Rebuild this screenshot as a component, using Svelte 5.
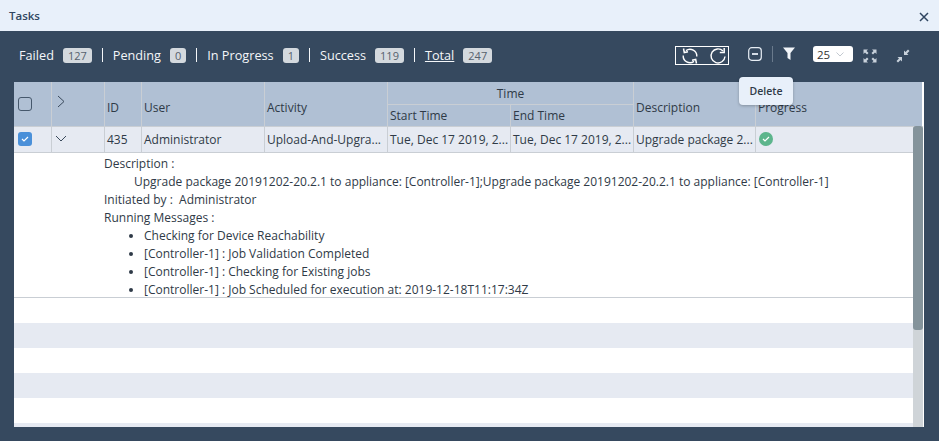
<script>
  const stats = [
    { label: 'Failed', n: 127 },
    { label: 'Pending', n: 0 },
    { label: 'In Progress', n: 1 },
    { label: 'Success', n: 119 },
    { label: 'Total', n: 247, link: true }
  ];
  const messages = [
    'Checking for Device Reachability',
    '[Controller-1] : Job Validation Completed',
    '[Controller-1] : Checking for Existing jobs',
    '[Controller-1] : Job Scheduled for execution at: 2019-12-18T11:17:34Z'
  ];
</script>

<div class="page">
  <header class="title">
    <span>Tasks</span>
    <svg class="close" width="10" height="10" viewBox="0 0 10 10"><path d="M1 1l8 8M9 1l-8 8" stroke="#2f4560" stroke-width="1.5" fill="none"/></svg>
  </header>

  <div class="toolbar">
    <div class="stats">
      {#each stats as s, i}
        {#if i > 0}<i class="sep"></i>{/if}
        <span class="stat" class:link={s.link}>{s.label}</span>
        <span class="badge">{s.n}</span>
      {/each}
    </div>
    <div class="tools">
      <div class="refresh">
        <svg width="18" height="18" viewBox="0 0 18 18" fill="none" stroke="#fff" stroke-width="1.4">
          <path d="M5 3.600A6.800 6.800 0 0 1 15.800 9.500M13 14.400A6.800 6.800 0 0 1 2.200 8.500"/>
          <path d="M2.500 1.500l.8 4 3.700-.8M15.500 16.500l-.8-4-3.700.8" stroke-width="1.500"/>
        </svg>
        <svg width="18" height="18" viewBox="0 0 18 18" fill="none" stroke="#fff" stroke-width="1.4">
          <path d="M14 4A7 7 0 1 0 16 9.500"/>
          <path d="M15.200 1v4.400h-4.400" stroke-width="1.500"/>
        </svg>
      </div>
      <svg class="minus" width="14" height="14" viewBox="0 0 14 14" fill="none" stroke="#e8eef5"><rect x="0.700" y="0.700" width="12.600" height="12.600" rx="3" stroke-width="1.200"/><path d="M4 7h6" stroke-width="1.800"/></svg>
      <i class="vsep"></i>
      <svg class="funnel" width="12" height="13" viewBox="0 0 12 13"><path d="M0 0.500h12L7.500 6v7l-3-2V6z" fill="#f2f5f9"/></svg>
      <div class="select"><span>25</span><svg width="8" height="5" viewBox="0 0 8 5" fill="none" stroke="#c3c9d0"><path d="M.5.5L4 4 7.500 .5"/></svg></div>
      <svg class="expand" width="14" height="14" viewBox="0 0 14 14" fill="#c9d2dc">
        <path d="M0.500 0.500h4.500l-1.500 1.500 2 2-1.500 1.500-2-2-1.500 1.500zM13.500 0.500v4.500l-1.500-1.500-2 2-1.500-1.500 2-2-1.500-1.500zM0.500 13.500v-4.500l1.500 1.500 2-2 1.500 1.500-2 2 1.500 1.500zM13.500 13.500h-4.500l1.500-1.500-2-2 1.500-1.500 2 2 1.500-1.500z"/>
      </svg>
      <svg class="shrink" width="14" height="14" viewBox="0 0 14 14" fill="#c9d2dc">
        <path d="M13.500 2l-2.500 2.500 1.500 1.500h-4.500v-4.500l1.500 1.500 2.500-2.500zM.5 12l2.500-2.500-1.500-1.500h4.500v4.500l-1.500-1.500-2.500 2.500z"/>
      </svg>
    </div>
  </div>

  <div class="tip">Delete</div>

  <section class="table">
    <div class="head">
      <div class="hc c0"><span class="box"></span></div>
      <div class="hc c1"><svg width="8" height="13" viewBox="0 0 8 13" fill="none" stroke="#3a4a5c" stroke-width="1"><path d="M1 1l6 5.500-6 5.500"/></svg></div>
      <div class="hc pad c2">ID</div>
      <div class="hc pad c3">User</div>
      <div class="hc pad c4">Activity</div>
      <div class="hc time">Time</div>
      <div class="hc pad start">Start Time</div>
      <div class="hc pad end">End Time</div>
      <div class="hc pad c7">Description</div>
      <div class="hc pad c8">Progress</div>
    </div>

    <div class="body">
      <div class="main">
        <div class="row">
          <div class="cell first"><span class="check"><svg width="8" height="6" viewBox="0 0 8 6" fill="none" stroke="#fff" stroke-width="1.200"><path d="M1 3l2 2 4-4"/></svg></span></div>
          <div class="cell chev"><svg width="12" height="7" viewBox="0 0 12 7" fill="none" stroke="#3a4a5c"><path d="M1 1l5 5 5-5"/></svg></div>
          <div class="cell">435</div>
          <div class="cell">Administrator</div>
          <div class="cell">Upload-And-Upgra...</div>
          <div class="cell">Tue, Dec 17 2019, 2...</div>
          <div class="cell">Tue, Dec 17 2019, 2...</div>
          <div class="cell">Upgrade package 2...</div>
          <div class="cell nob"><span class="ok"><svg width="8" height="6" viewBox="0 0 8 6" fill="none" stroke="#fff" stroke-width="1.200"><path d="M1 3l2 2 4-4"/></svg></span></div>
        </div>
        <div class="detail">
          <div>Description :</div>
          <div class="indent">Upgrade package 20191202-20.2.1 to appliance: [Controller-1];Upgrade package 20191202-20.2.1 to appliance: [Controller-1]</div>
          <div>Initiated by :&nbsp; Administrator</div>
          <div>Running Messages :</div>
          <ul>
            {#each messages as m}<li>{m}</li>{/each}
          </ul>
        </div>
        <div class="stripes">
          <div></div><div class="g"></div><div></div><div class="g"></div><div></div><div class="g"></div>
        </div>
      </div>
      <div class="scroll"><div class="thumb"></div></div>
    </div>
  </section>
</div>

<style>
  :global(body) { margin: 0; }
  .page {
    position: relative;
    width: 939px;
    height: 441px;
    background: #36495f;
    overflow: hidden;
    font-family: "Open Sans", sans-serif;
    font-size: 12px;
    color: #2f3a47;
  }
  .title {
    height: 31px;
    background: #e8f0fa;
    display: flex;
    align-items: center;
    justify-content: space-between;
    padding: 0 10px 1px 9px;
    box-sizing: border-box;
    color: #2f4560;
    font-weight: 600;
    font-size: 11.500px;
  }
  .close { margin-top: 4px; }
  .toolbar {
    height: 51px;
    display: flex;
    justify-content: space-between;
    padding: 0 29px 0 19px;
  }
  .stats {
    display: flex;
    align-items: center;
    color: #f4f6f9;
    font-size: 12.700px;
    height: 48px;
  }
  .stat.link { text-decoration: underline; }
  .badge {
    margin-left: 9px;
    background: #d4d9de;
    color: #56616d;
    font-size: 11px;
    line-height: 15px;
    height: 15px;
    padding: 0 5px;
    border-radius: 3px;
  }
  .sep {
    width: 1px;
    height: 14px;
    background: #f4f6f9;
    margin: 0 10px;
  }
  .tools { display: flex; align-items: flex-start; padding-top: 15px; }
  .refresh {
    height: 17px;
    border: 1px solid #fff;
    display: flex;
    align-items: center;
    justify-content: space-between;
    padding: 0 1px 0 5px;
    box-sizing: content-box;
    width: 46px;
  }
  .minus { margin: 1px 0 0 19px; }
  .vsep { width: 1px; height: 16px; background: #6a7a8c; margin: 0 10px; }
  .funnel { margin-top: 1px; }
  .select {
    margin-left: 18px;
    width: 40px;
    height: 16px;
    background: #fff;
    border-radius: 3px;
    display: flex;
    align-items: center;
    justify-content: space-between;
    padding: 0 9px 0 4px;
    box-sizing: border-box;
    color: #333;
    font-size: 11.500px;
  }
  .expand { margin: 3px 0 0 10px; }
  .shrink { margin: 3px 0 0 19px; }
  .tip {
    position: absolute;
    left: 739px;
    top: 77px;
    width: 54px;
    height: 28px;
    background: #e8f0fa;
    border-radius: 4px;
    box-shadow: 0 1px 3px rgba(0,0,0,.25);
    z-index: 2;
    display: flex;
    align-items: center;
    justify-content: center;
    font-size: 10.500px;
    font-weight: 600;
    color: #2f3a47;
  }
  .table {
    margin-left: 14px;
    width: 910px;
    height: 345px;
    background: #fff;
    overflow: hidden;
  }
  .head {
    display: grid;
    grid-template-columns: 38px 53px 37px 123px 123px 123px 123px 122px 1fr;
    grid-template-rows: 23px 21px;
    width: 908px;
    height: 44px;
    background: #b0c0d4;
    border-bottom: 1px solid #c9ced4;
  }
  .hc {
    border-right: 1px solid #c9ced4;
    display: flex;
    align-items: center;
    box-sizing: border-box;
    grid-row: 1 / 3;
    color: #2f3a47;
  }
  .pad { padding-left: 2px; padding-top: 6px; }
  .c0 { padding-left: 4px; }
  .c1 { padding: 0 0 6px 5px; }
  .box {
    width: 14px;
    height: 14px;
    border: 1px solid #46586c;
    border-radius: 3px;
    box-sizing: border-box;
  }
  .time {
    grid-column: 6 / 8;
    grid-row: 1;
    justify-content: center;
    border-bottom: 1px solid #c9ced4;
  }
  .start { grid-column: 6; grid-row: 2; padding-top: 0; }
  .end { grid-column: 7; grid-row: 2; padding-top: 0; }
  .c7 { grid-column: 8; }
  .c8 { grid-column: 9; border-right: 0; }
  .body { display: flex; height: 300px; }
  .main { width: 899px; flex: none; }
  .row {
    display: grid;
    grid-template-columns: 38px 53px 37px 123px 123px 123px 123px 122px 1fr;
    height: 26px;
    box-sizing: border-box;
    background: #e6eaf2;
    border-bottom: 1px solid #c9ced4;
  }
  .cell {
    border-right: 1px solid #c9ced4;
    padding: 0 0 0 2px;
    line-height: 25px;
    white-space: nowrap;
    min-width: 0;
  }
  .first { padding: 5px 0 0 4px; line-height: 0; }
  .chev { padding: 8px 0 0 3px; line-height: 0; }
  .nob { border-right: 0; padding: 5px 0 0 3px; line-height: 0; }
  .check {
    display: inline-flex;
    width: 14px;
    height: 14px;
    background: #4a90d9;
    border-radius: 3px;
    align-items: center;
    justify-content: center;
  }
  .ok {
    display: inline-flex;
    width: 14px;
    height: 14px;
    background: #5cb58c;
    border-radius: 50%;
    align-items: center;
    justify-content: center;
  }
  .detail {
    height: 145px;
    padding: 2px 0 0 90px;
    box-sizing: border-box;
    border-bottom: 1px solid #c9ced4;
    line-height: 18px;
    background: #fff;
    white-space: nowrap;
  }
  .indent { padding-left: 30px; }
  ul { margin: 0; padding: 0 0 0 40px; }
  .stripes div { height: 25px; }
  .stripes .g { background: #e6eaf2; }
  .scroll {
    width: 10px;
    height: 301px;
    margin-top: -1px;
    background: #cfd4d8;
    flex: none;
  }
  .thumb {
    height: 204px;
    background: #84939b;
    border-radius: 3px;
  }
</style>
